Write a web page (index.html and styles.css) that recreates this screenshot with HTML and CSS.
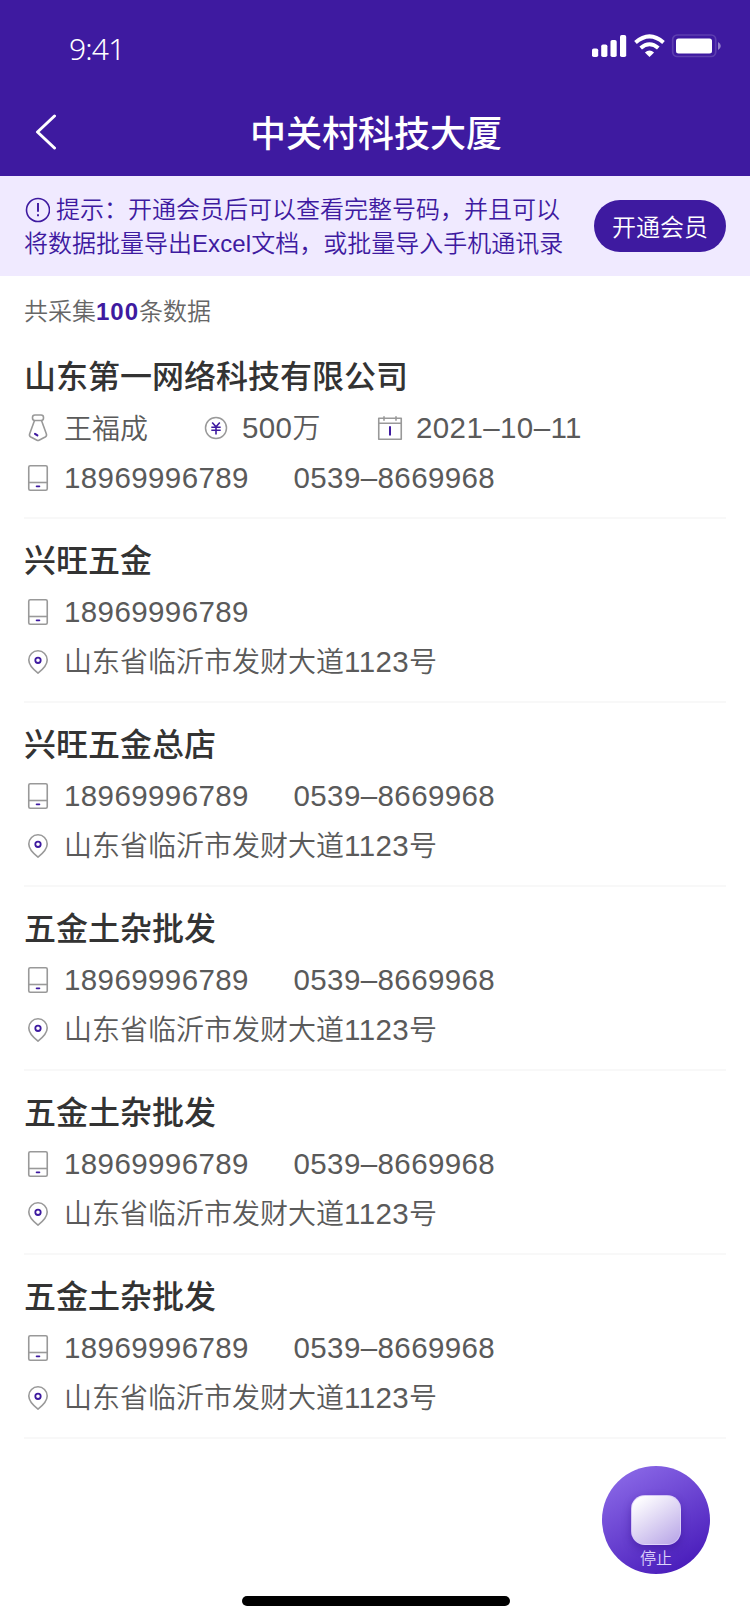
FILE: index.html
```html
<!DOCTYPE html>
<html lang="zh-CN">
<head>
<meta charset="utf-8">
<title>中关村科技大厦</title>
<link rel="stylesheet" href="styles.css">
</head>
<body>
<svg class="defs" aria-hidden="true">
  <symbol id="phone" viewBox="0 0 28 28"><g fill="none" stroke="#999" stroke-width="1.6"><rect x="4.75" y="1.75" width="18.5" height="24.5" rx="1.5"/><path d="M5 18.5h18"/></g><path d="M12.6 22.3h2.8" stroke="#3e1aa0" stroke-width="1.8" stroke-linecap="round"/></symbol>
  <symbol id="pin" viewBox="0 0 28 28"><path d="M14 25.1C10 22 4.8 17.3 4.8 12A9.2 9.2 0 0 1 23.2 12C23.2 17.3 18 22 14 25.1Z" fill="none" stroke="#999" stroke-width="1.6" stroke-linejoin="round"/><circle cx="14" cy="12.3" r="2.7" fill="none" stroke="#3e1aa0" stroke-width="1.8"/></symbol>
  <symbol id="person" viewBox="0 0 28 28"><g fill="none" stroke="#999" stroke-width="1.6" stroke-linejoin="round"><rect x="8.5" y="1" width="11" height="5.5" rx="2.4"/><path d="M10.500 6.500L5.600 20Q5 22 6.800 23L13 26.200Q14 26.700 15 26.200L21.200 23Q23 22 22.400 20L17.500 6.500"/></g><path d="M11 19.800l2.400 1.600" stroke="#3e1aa0" stroke-width="2" stroke-linecap="round"/></symbol>
  <symbol id="yen" viewBox="0 0 28 28"><circle cx="14" cy="14" r="10.5" fill="none" stroke="#999" stroke-width="1.5"/><path d="M10.200 8.500L14 12.800l3.800-4.300M9.300 13.300h9.400M9.300 16.300h9.400M14 13v7.500" fill="none" stroke="#3e1aa0" stroke-width="1.6"/></symbol>
  <symbol id="calendar" viewBox="0 0 28 28"><path d="M2.750 4.300h22.500v21H2.750zM2.750 9.300h22.500M8 2.200v4.600M20 2.200v4.600" fill="none" stroke="#999" stroke-width="1.6" stroke-linejoin="round"/><path d="M14 12.300v9.200" stroke="#3e1aa0" stroke-width="2"/></symbol>
</svg>
<div class="screen">
  <header class="header">
    <div class="status">
      <span class="time">9:41</span>
      <svg class="signals" width="130" height="24" viewBox="0 0 130 24">
        <g fill="#fff">
          <rect x="0" y="14.5" width="6.2" height="8.5" rx="1.8"/><rect x="9.2" y="10.5" width="6.2" height="12.5" rx="1.8"/><rect x="18.5" y="6" width="6.2" height="17" rx="1.8"/><rect x="28" y="1" width="6.2" height="22" rx="1.8"/>
          <path d="M57.500 23l-4.600-4.600q4.600-3.800 9.200 0z"/>
          <rect x="84" y="4.500" width="36" height="15" rx="2.5"/>
        </g>
        <path d="M43.500 8.400q14-12.200 28 0M48.700 14q8.800-7.400 17.600 0" fill="none" stroke="#fff" stroke-width="4"/>
        <rect x="80.700" y="1" width="43" height="21.500" rx="4.5" fill="none" stroke="#fff" stroke-opacity=".16" stroke-width="1.7"/>
        <path d="M126 8q2.800 1.300 2.800 4T126 16z" fill="#fff" fill-opacity=".45"/>
      </svg>
    </div>
    <div class="nav">
      <svg class="back" width="22" height="36" viewBox="0 0 22 36"><path d="M19.500 2L2.500 18l17 16" fill="none" stroke="#fff" stroke-width="3" stroke-linecap="round" stroke-linejoin="round"/></svg>
      <h1 class="page-title">中关村科技大厦</h1>
    </div>
  </header>
  <section class="notice">
    <p class="notice-text"><svg class="alert" width="26" height="26" viewBox="0 0 26 26"><circle cx="14" cy="13" r="11.5" fill="none" stroke="#3e1aa0" stroke-width="1.6"/><path d="M14 6v8.800M14 17.300v2" stroke="#3e1aa0" stroke-width="1.9"/></svg><span class="tip">提示：开通会员后可以查看完整号码，并且可以</span><br>将数据批量导出<span class="latin">Excel</span>文档，或批量导入手机通讯录</p>
    <button class="vip">开通会员</button>
  </section>
  <p class="count">共采集<b>100</b>条数据</p>
  <main class="list">
    <article class="item">
      <h2>山东第一网络科技有限公司</h2>
      <div class="row"><svg><use href="#person"/></svg><span class="owner">王福成</span><svg><use href="#yen"/></svg><span class="capital"><span class="num">500</span>万</span><svg><use href="#calendar"/></svg><span class="num">2021–10–11</span></div>
      <div class="row"><svg><use href="#phone"/></svg><span class="num mobile">18969996789</span><span class="num">0539–8669968</span></div>
    </article>
    <article class="item">
      <h2>兴旺五金</h2>
      <div class="row"><svg><use href="#phone"/></svg><span class="num mobile">18969996789</span></div>
      <div class="row"><svg><use href="#pin"/></svg><span class="address">山东省临沂市发财大道<span class="num">1123</span>号</span></div>
    </article>
    <article class="item">
      <h2>兴旺五金总店</h2>
      <div class="row"><svg><use href="#phone"/></svg><span class="num mobile">18969996789</span><span class="num">0539–8669968</span></div>
      <div class="row"><svg><use href="#pin"/></svg><span class="address">山东省临沂市发财大道<span class="num">1123</span>号</span></div>
    </article>
    <article class="item">
      <h2>五金土杂批发</h2>
      <div class="row"><svg><use href="#phone"/></svg><span class="num mobile">18969996789</span><span class="num">0539–8669968</span></div>
      <div class="row"><svg><use href="#pin"/></svg><span class="address">山东省临沂市发财大道<span class="num">1123</span>号</span></div>
    </article>
    <article class="item">
      <h2>五金土杂批发</h2>
      <div class="row"><svg><use href="#phone"/></svg><span class="num mobile">18969996789</span><span class="num">0539–8669968</span></div>
      <div class="row"><svg><use href="#pin"/></svg><span class="address">山东省临沂市发财大道<span class="num">1123</span>号</span></div>
    </article>
    <article class="item">
      <h2>五金土杂批发</h2>
      <div class="row"><svg><use href="#phone"/></svg><span class="num mobile">18969996789</span><span class="num">0539–8669968</span></div>
      <div class="row"><svg><use href="#pin"/></svg><span class="address">山东省临沂市发财大道<span class="num">1123</span>号</span></div>
    </article>
  </main>
  <button class="stop"><span class="stop-icon"></span><span class="stop-label">停止</span></button>
  <div class="home-bar"></div>
</div>
</body>
</html>
```

FILE: styles.css
```css
* { box-sizing: border-box; margin: 0; padding: 0; }
body {
  background: #fff;
  font-family: "Noto Sans CJK SC", sans-serif;
  font-weight: 350;
  color: #5a5a5a;
}
button { border: 0; font: inherit; }
.defs { position: absolute; width: 0; height: 0; }
.screen {
  position: relative;
  width: 750px;
  height: 1624px;
  overflow: hidden;
}
.header {
  height: 176px;
  background: #3e1aa0;
  color: #fff;
}
.status {
  display: flex;
  justify-content: space-between;
  height: 88px;
  padding: 34px 28px 0 69px;
}
.time {
  margin-top: -1px;
  font: 350 30px/32px "Noto Sans", sans-serif;
  letter-spacing: -.8px;
}
.nav {
  display: grid;
  grid-template-columns: 22px 1fr 22px;
  align-items: center;
  height: 88px;
  padding: 0 35px;
}
.page-title {
  padding-left: 2px;
  font-size: 36px;
  font-weight: 500;
  line-height: 86px;
  height: 88px;
  text-align: center;
}
.notice {
  display: flex;
  justify-content: space-between;
  align-items: flex-start;
  height: 100px;
  padding: 15px 24px 0;
  background: #f0eaff;
  color: #3e1aa0;
}
.notice-text {
  font-size: 24px;
  line-height: 34px;
  white-space: nowrap;
}
.alert {
  margin-right: 6px;
  vertical-align: -5px;
}
.latin { font-family: "Liberation Sans", sans-serif; letter-spacing: .1px; }
.vip {
  width: 132px;
  height: 52px;
  margin-top: 9px;
  border-radius: 26px;
  background: #3e1aa0;
  color: #fff;
  font-size: 24px;
  line-height: 49px;
  padding-bottom: 2px;
}
.count {
  height: 59px;
  padding: 16px 24px 0;
  font-size: 24px;
  line-height: 36px;
  color: #666;
}
.count b {
  font-family: "Liberation Sans", sans-serif;
  font-weight: 700;
  letter-spacing: 1px;
  color: #3e1aa0;
}
.list { padding: 0 24px; }
.item {
  height: 184px;
  padding-top: 17px;
  border-bottom: 2px solid #f8f8f8;
}
.item h2 {
  margin-bottom: 7px;
  font-size: 32px;
  font-weight: 500;
  line-height: 44px;
  color: #333;
}
.row {
  display: flex;
  align-items: center;
  height: 50px;
  font-size: 28px;
  line-height: 50px;
  white-space: nowrap;
}
.row svg {
  flex: none;
  width: 28px;
  height: 28px;
  margin-right: 12px;
}
.num {
  font-family: "Liberation Sans", sans-serif;
  font-size: 29.5px;
  letter-spacing: .4px;
}
.owner, .capital, .address { margin-top: -2px; }
.owner { width: 138px; }
.capital { width: 134px; }
.mobile { width: 229.5px; }
.stop {
  position: absolute;
  left: 602px;
  top: 1466px;
  display: flex;
  flex-direction: column;
  align-items: center;
  width: 108px;
  height: 108px;
  padding-top: 29px;
  border-radius: 50%;
  background: linear-gradient(150deg, #8967e6 10%, #481bba 90%);
}
.stop-icon {
  width: 50px;
  height: 50px;
  border: 1.5px solid rgba(214, 200, 250, .7);
  border-radius: 14px;
  background: linear-gradient(145deg, #fff 8%, #b6a3e6 100%);
  box-shadow: 0 4px 8px rgba(50, 15, 140, .45);
}
.stop-label {
  margin-top: 2px;
  font-size: 16px;
  line-height: 20px;
  color: #ddd2fa;
}
.home-bar {
  position: absolute;
  left: 242px;
  top: 1596px;
  width: 268px;
  height: 10px;
  border-radius: 5px;
  background: #000;
}
```
